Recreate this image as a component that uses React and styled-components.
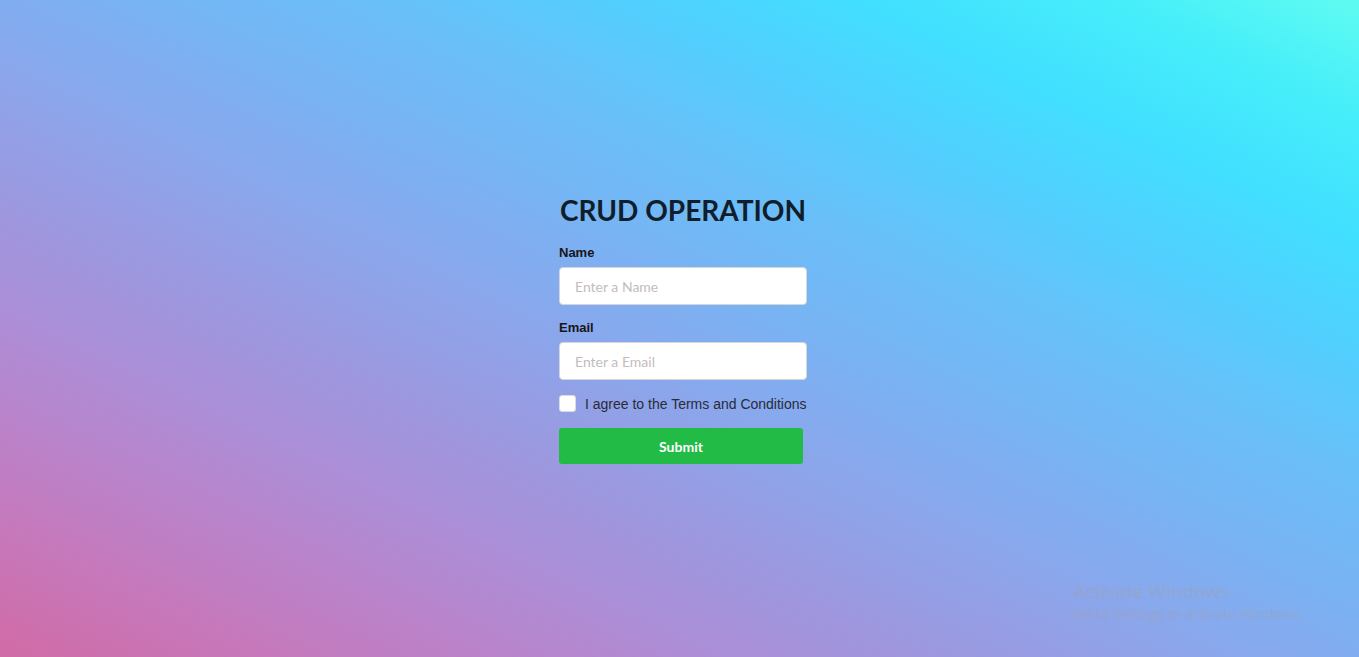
import React, { useState } from 'react';
import styled, { createGlobalStyle } from 'styled-components';

const GlobalStyle = createGlobalStyle`
  * {
    box-sizing: border-box;
  }
  html, body {
    margin: 0;
    padding: 0;
    height: 100%;
  }
  body {
    font-family: Lato, "Open Sans", sans-serif;
  }
  #root {
    height: 100%;
  }
`;

const Page = styled.div`
  min-height: 100vh;
  display: flex;
  align-items: center;
  justify-content: center;
  padding-left: 7px;
  background-image: linear-gradient(
    to right top,
    #d16ba5,
    #c777b9,
    #ba83ca,
    #aa8fd8,
    #9a9ae1,
    #8aa7ec,
    #79b3f4,
    #69bff8,
    #52cffe,
    #41dfff,
    #46eefa,
    #5ffbf1
  );
`;

const Form = styled.form`
  width: 248px;
  display: flex;
  flex-direction: column;
`;

const Title = styled.h1`
  margin: 0 0 18px;
  text-align: center;
  font-family: Lato, sans-serif;
  font-size: 28px;
  font-weight: 700;
  line-height: 34px;
  color: #0f1e2a;
  white-space: nowrap;
`;

const Field = styled.div`
  display: flex;
  flex-direction: column;
  margin-bottom: 15px;
`;

const Label = styled.label`
  font-family: "Liberation Sans", Arial, sans-serif;
  font-size: 13px;
  font-weight: 700;
  line-height: 15px;
  color: #161616;
  margin-bottom: 7px;
`;

const Input = styled.input`
  width: 100%;
  height: 38px;
  padding: 0 15px;
  border: 1px solid #d6d6d6;
  border-radius: 4px;
  background: #fff;
  font-family: Lato, sans-serif;
  font-size: 14px;
  color: #333;
  outline: none;

  &::placeholder {
    color: #c4bcbc;
  }
`;

const CheckRow = styled.label`
  display: flex;
  align-items: center;
  gap: 9px;
  margin-bottom: 16px;
  font-family: "Liberation Sans", Arial, sans-serif;
  font-size: 14px;
  color: #2a2a3a;
  white-space: nowrap;
  cursor: pointer;
`;

const Box = styled.span`
  width: 17px;
  height: 17px;
  flex: none;
  border: 1px solid #dcdcdc;
  border-radius: 3px;
  background: #fff;
  display: flex;
  align-items: center;
  justify-content: center;
  color: #22bb45;
  font-size: 12px;
  line-height: 1;
`;

const HiddenCheck = styled.input`
  display: none;
`;

const SubmitButton = styled.button`
  width: 244px;
  height: 36px;
  border: none;
  border-radius: 3px;
  background: #22bb45;
  color: #fff;
  font-family: Lato, sans-serif;
  font-size: 14px;
  font-weight: 700;
  cursor: pointer;
`;

const Watermark = styled.div`
  position: fixed;
  left: 1073px;
  top: 579px;
  font-family: "Open Sans", "Noto Sans", sans-serif;
  color: rgba(160, 160, 175, 0.55);
  pointer-events: none;
`;

const WatermarkTitle = styled.div`
  font-size: 19px;
  line-height: 24px;
`;

const WatermarkText = styled.div`
  font-size: 14px;
  line-height: 22px;
`;

const App = () => {
  const [agreed, setAgreed] = useState(false);

  return (
    <Page>
      <GlobalStyle />
      <Form onSubmit={e => e.preventDefault()}>
        <Title>CRUD OPERATION</Title>
        <Field>
          <Label htmlFor="name">Name</Label>
          <Input id="name" type="text" placeholder="Enter a Name" />
        </Field>
        <Field>
          <Label htmlFor="email">Email</Label>
          <Input id="email" type="email" placeholder="Enter a Email" />
        </Field>
        <CheckRow>
          <HiddenCheck
            type="checkbox"
            checked={agreed}
            onChange={() => setAgreed(!agreed)}
          />
          <Box>{agreed ? '✓' : ''}</Box>
          I agree to the Terms and Conditions
        </CheckRow>
        <SubmitButton type="submit">Submit</SubmitButton>
      </Form>
      <Watermark>
        <WatermarkTitle>Activate Windows</WatermarkTitle>
        <WatermarkText>Go to Settings to activate Windows.</WatermarkText>
      </Watermark>
    </Page>
  );
};

export default App;
